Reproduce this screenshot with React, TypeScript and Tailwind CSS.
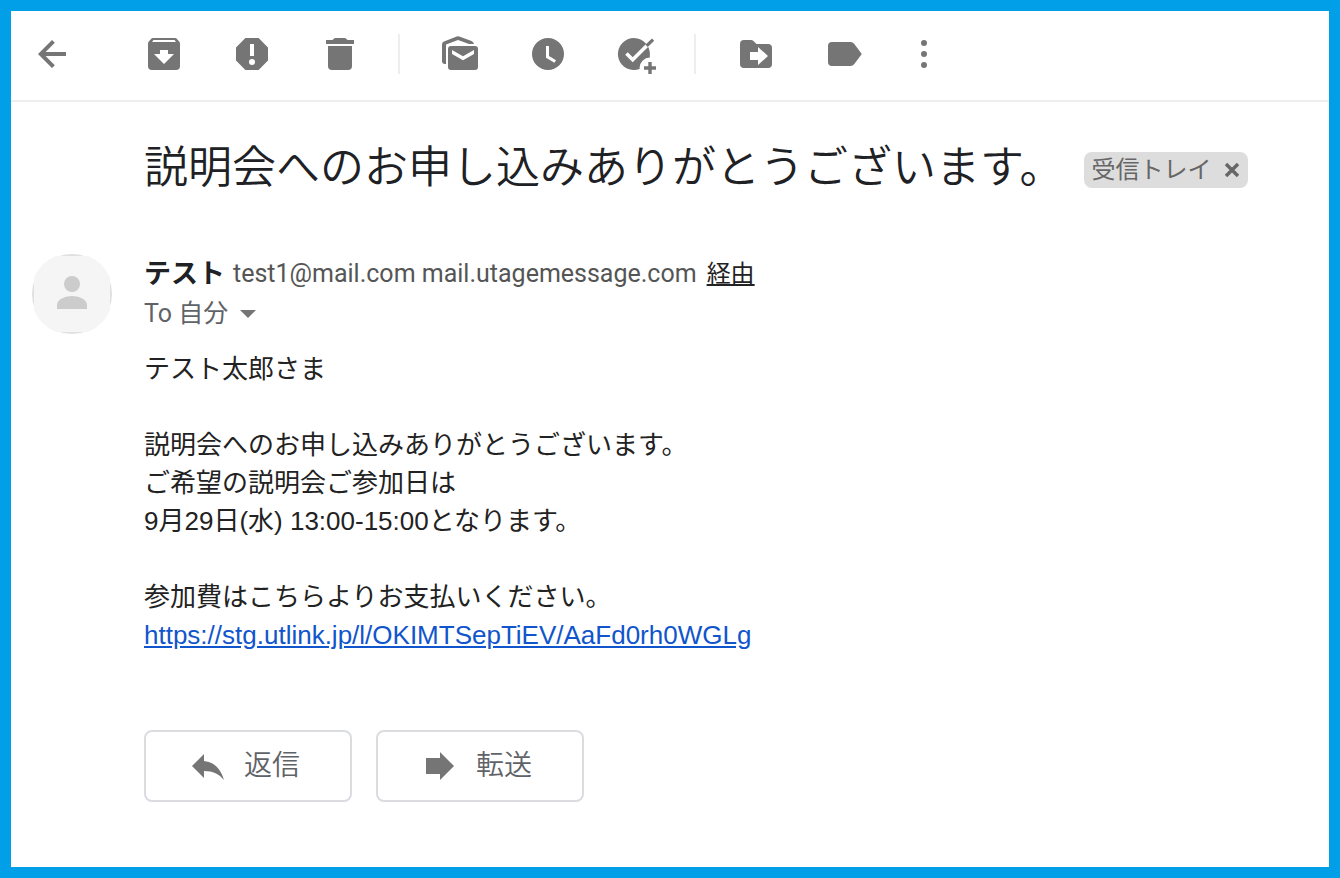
import React from 'react';

/** Square 40px icon; paths are drawn on a 40-unit grid. */
const Icon: React.FC<{ children: React.ReactNode }> = ({ children }) => (
  <svg viewBox="0 0 40 40" className="block size-10 shrink-0 fill-[#757575]" fillRule="evenodd" aria-hidden="true">
    {children}
  </svg>
);

const ToolButton: React.FC<{ label: string; children: React.ReactNode }> = ({ label, children }) => (
  <button type="button" aria-label={label} className="block shrink-0 cursor-pointer">
    <Icon>{children}</Icon>
  </button>
);

const Separator = () => <div className="ml-[38px] mr-10 h-10 w-0.5 shrink-0 bg-[#eeeeee]" />;

const Toolbar = () => (
  <header className="flex items-center border-b-2 border-[#eeeeee] pt-[23px] pb-[26px] pl-[21px]">
    <ToolButton label="戻る">
      <path d="M34 18H13.6L22.8 8.8 20 6 6 20l14 14 2.8-2.8L13.6 22H34z" />
    </ToolButton>

    <div className="ml-[72px] flex gap-12">
      <ToolButton label="アーカイブ">
        <path d="M9 4h22q1.2 0 2 1l2.2 2.6q.8 1 .8 2.4v22q0 4-4 4H8q-4 0-4-4V10q0-1.4.8-2.4L7 5q.8-1 2-1zM9.5 6L8 8h24l-1.500-2zM16 16v4h-6l10 10 10-10h-6v-4z" />
      </ToolButton>
      <ToolButton label="迷惑メールを報告">
        <path d="M13.4 4h13.2L36 13.4v13.2L26.6 36H13.4L4 26.6V13.4zM18 10v12h4V10zM20 25a3 3 0 1 0 0 6a3 3 0 1 0 0-6z" />
      </ToolButton>
      <ToolButton label="削除">
        <path d="M6 6h6.500l1.500-1.500q.6-.5 1.400-.5h9.200q.8 0 1.400.5L27.500 6H34v4H6zM8 12h24v20q0 4-4 4H12q-4 0-4-4z" />
      </ToolButton>
    </div>

    <Separator />

    <div className="flex gap-12">
      <ToolButton label="未読にする">
        <path d="M6 30H5q-3 0-3-3V10.500q0-2.300 2-3L16.700 2.500q1.300-.5 2.600 0L31.500 7q2 .8 2.500 3h-5L18 6 6 10.600z" />
        <path d="M11 12h24q3 0 3 3v18q0 3-3 3H11q-3 0-3-3V15q0-3 3-3zM12 16v4l11 6.200L34 20v-4l-11 6.200z" />
      </ToolButton>
      <ToolButton label="スヌーズ">
        <path d="M20 4a16 16 0 1 0 0 32a16 16 0 1 0 0-32zM18 12h3v10l7 4.200-1.600 2.600L18 23.800z" />
      </ToolButton>
      <ToolButton label="ToDo リストに追加">
        <path d="M24 34.850A16 16 0 1 1 33.850 18.500L33.850 23.500A10.500 10.500 0 0 0 23.500 34z" />
        <path d="M10.500 19.500l6.200 6.200L32 10.400" fill="none" stroke="#fff" strokeWidth="3.600" />
        <path d="M29.300 10.700l6.700-6.100 2.200 2.200-6.400 6.200z" />
        <path d="M32.300 28h3.400v4.300H40v3.400h-4.300V40h-3.400v-4.300H28v-3.400h4.300z" />
      </ToolButton>
    </div>

    <Separator />

    <div className="flex gap-12">
      <ToolButton label="移動">
        <path d="M8 6h7q1.500 0 2.500 1l3 3H32q4 0 4 4v16q0 4-4 4H8q-4 0-4-4V10q0-4 4-4zM22 13v5h-8v8h8v5l10-9z" />
      </ToolButton>
      <ToolButton label="ラベル">
        <path d="M8 8h18.500q2.300 0 3.600 1.800L37.800 20l-7.700 10.200Q28.800 32 26.500 32H8q-4 0-4-4V12q0-4 4-4z" />
      </ToolButton>
    </div>
    <div className="ml-10">
      <ToolButton label="その他">
        <circle cx="20" cy="9" r="3" />
        <circle cx="20" cy="20" r="3" />
        <circle cx="20" cy="31" r="3" />
      </ToolButton>
    </div>
  </header>
);

const Avatar = () => (
  <svg viewBox="0 0 80 80" className="size-20 shrink-0" aria-hidden="true">
    <circle cx="40" cy="40" r="40" fill="#e0e0e0" />
    <path d="M24 2h32A40 40 0 0 1 78 24v32A40 40 0 0 1 56 78H24A40 40 0 0 1 2 56V24A40 40 0 0 1 24 2z" fill="#f5f5f5" />
    <circle cx="40" cy="30" r="8" fill="#cccccc" />
    <path d="M25 55v-4c0-6 9-9 15-9s15 3 15 9v4z" fill="#cccccc" />
  </svg>
);

const ActionButton: React.FC<{ label: string; children: React.ReactNode }> = ({ label, children }) => (
  <button
    type="button"
    className="flex h-[72px] w-52 cursor-pointer items-center gap-4 rounded-lg border-2 border-[#dadce0] pl-[42px] text-[28px] leading-10 font-[350] text-[#5f6368]"
  >
    <Icon>{children}</Icon>
    {label}
  </button>
);

const App = () => (
  <div
    lang="ja"
    className="min-h-screen border-[11px] border-[#009fe8] bg-white font-['Roboto','Noto_Sans_CJK_JP',sans-serif] text-[#202124]"
  >
    <Toolbar />

    <main className="pr-5 pb-16 pl-[21px]">
      {/* Subject and inbox label */}
      <div className="flex flex-wrap items-center gap-5 pt-9 pl-28">
        <h1 className="text-[44px] leading-[60px] font-[350]">説明会へのお申し込みありがとうございます。</h1>
        <div className="mt-1 flex h-9 items-center rounded-lg bg-[#dddddd] px-2 text-2xl text-[#666666]">
          受信トレイ
          <button type="button" aria-label="受信トレイを外す" className="ml-3 cursor-pointer">
            <svg viewBox="0 0 16 16" className="block size-4" aria-hidden="true">
              <path d="M2 2l12 12M14 2L2 14" stroke="#666666" strokeWidth="3.400" />
            </svg>
          </button>
        </div>
      </div>

      <div className="mt-14 flex items-start gap-8">
        <Avatar />
        <div className="min-w-0">
          {/* Sender */}
          <div className="flex flex-wrap items-center leading-10 text-[#555555]">
            <span className="mr-2 text-[27px] font-bold text-[#202124]">テスト</span>
            <span className="mr-2.5 text-[25px]">test1@mail.com mail.utagemessage.com</span>
            <a href="#via" className="text-2xl leading-10 text-[#222222] underline">経由</a>
          </div>
          <button type="button" className="flex cursor-pointer items-center gap-3 text-[25px] leading-10 text-[#5f6368]">
            To 自分
            <svg viewBox="0 0 16 8" className="h-2 w-4 fill-[#757575]" aria-hidden="true">
              <path d="M0 0h16L8 8z" />
            </svg>
          </button>

          {/* Message body */}
          <div className="mt-4 font-['Liberation_Sans','Noto_Sans_CJK_JP',sans-serif] text-[26px] leading-[38px] text-[#222222]">
            <p>テスト太郎さま</p>
            <p className="mt-[38px]">
              説明会へのお申し込みありがとうございます。
              <br />
              ご希望の説明会ご参加日は
              <br />
              9月29日(水) 13:00-15:00となります。
            </p>
            <p className="mt-[38px]">
              参加費はこちらよりお支払いください。
              <br />
              <a href="https://stg.utlink.jp/l/OKIMTSepTiEV/AaFd0rh0WGLg" className="text-[#1155cc] underline">
                https://stg.utlink.jp/l/OKIMTSepTiEV/AaFd0rh0WGLg
              </a>
            </p>
          </div>

          <div className="mt-[76px] flex flex-wrap gap-6">
            <ActionButton label="返信">
              <path d="M4 20L16 8v7c10 1 17 8 20 19-5-6-11-9-20-9v7z" />
            </ActionButton>
            <ActionButton label="転送">
              <path d="M6 12h14V6l14 14-14 14v-6H6z" />
            </ActionButton>
          </div>
        </div>
      </div>
    </main>
  </div>
);

export default App;
